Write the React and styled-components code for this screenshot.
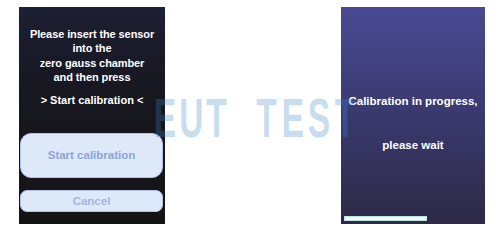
import React from 'react';
import styled, { createGlobalStyle } from 'styled-components';

const Global = createGlobalStyle`
  html, body { margin: 0; padding: 0; background: #ffffff; }
  body { font-family: "Liberation Sans", Arial, sans-serif; }
`;

const Page = styled.div`
  position: relative;
  width: 499px;
  height: 237px;
  display: flex;
  align-items: flex-start;
  gap: 176px;
  padding: 7px 0 0 19px;
  box-sizing: border-box;
  overflow: hidden;
`;

const Screen = styled.div`
  width: ${p => p.w}px;
  height: 217px;
  box-sizing: border-box;
  display: flex;
  flex-direction: column;
  align-items: center;
  color: #ffffff;
  font-weight: bold;
  font-size: 11px;
  background: ${p => p.bg};
`;

const Prompt = styled.div`
  margin-top: 20px;
  text-align: center;
  line-height: 14.4px;
  letter-spacing: -0.1px;
`;

const Hint = styled.div`
  margin-top: 9px;
  text-align: center;
`;

const Button = styled.div`
  align-self: stretch;
  margin: ${p => p.mt}px 2px 0 1px;
  height: ${p => p.h}px;
  box-sizing: border-box;
  display: flex;
  align-items: center;
  justify-content: center;
  background: #dde8f8;
  border: 1.5px solid #b3c2ec;
  border-radius: ${p => p.r}px;
  color: ${p => p.fg};
  font-size: 11.5px;
`;

const Status = styled.div`
  margin-top: ${p => p.mt}px;
  text-align: center;
  font-size: 11.5px;
`;

const Progress = styled.div`
  align-self: flex-start;
  margin: auto 0 3px 3px;
  width: 83px;
  height: 5px;
  box-sizing: border-box;
  background: #eef8f7;
  border: 1px solid #bfe3e0;
`;

const Watermark = styled.div`
  position: absolute;
  left: 151px;
  top: 88px;
  display: flex;
  color: rgba(60, 135, 200, 0.3);
  font-family: "Liberation Sans", Arial, sans-serif;
  font-weight: bold;
  font-size: 56px;
  line-height: 60px;
  pointer-events: none;
`;

const Letter = styled.span`
  width: ${p => p.w}px;
  display: flex;
  justify-content: center;
  transform: scaleX(0.6);
`;

const letters = [
  ['E', 28], ['U', 25], ['T', 25], [' ', 24],
  ['T', 27], ['E', 26], ['S', 26], ['T', 26],
];

export default function App() {
  return (
    <>
      <Global />
      <Page>
        <Screen w={146} bg="linear-gradient(180deg, #1d1f33 0%, #17171f 40%, #141417 100%)">
          <Prompt>
            Please insert the sensor<br />
            into the<br />
            zero gauss chamber<br />
            and then press
          </Prompt>
          <Hint>&gt; Start calibration &lt;</Hint>
          <Button mt={27} h={45} r={11} fg="#8ea3de">Start calibration</Button>
          <Button mt={12} h={22} r={7} fg="#a3b5e6">Cancel</Button>
        </Screen>
        <Screen w={144} bg="linear-gradient(180deg, #4a4a93 0%, #3b3a72 45%, #2c2a46 100%)">
          <Status mt={88}>Calibration in progress,</Status>
          <Status mt={32}>please wait</Status>
          <Progress />
        </Screen>
        <Watermark>
          {letters.map(([c, w], i) => (
            <Letter key={i} w={w}>{c === ' ' ? '\u00a0' : c}</Letter>
          ))}
        </Watermark>
      </Page>
    </>
  );
}
